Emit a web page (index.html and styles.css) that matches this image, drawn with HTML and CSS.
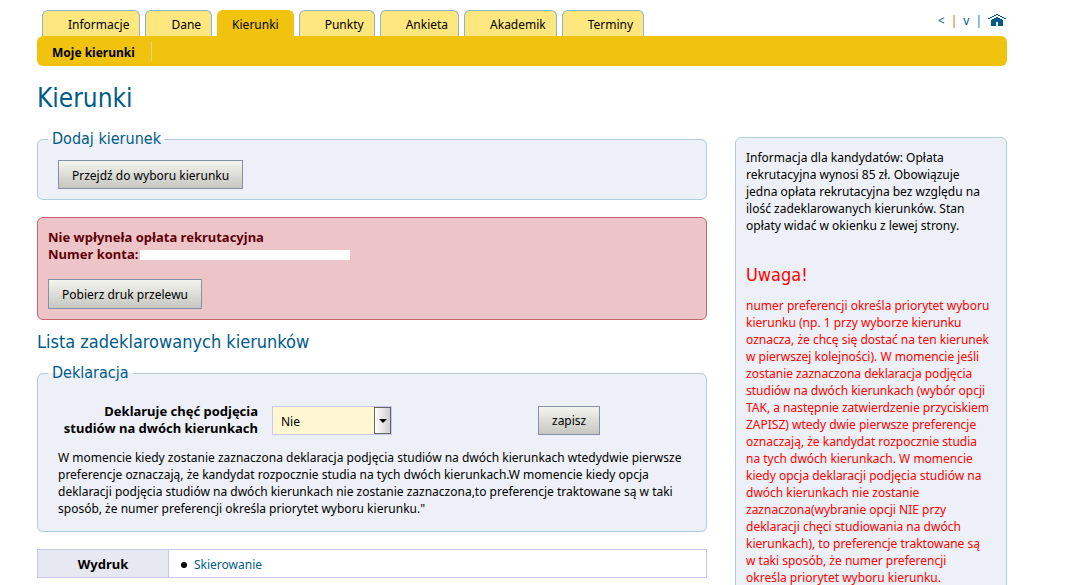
FILE: index.html
```html
<!DOCTYPE html>
<html lang="pl">
<head>
<meta charset="utf-8">
<title>Kierunki</title>
<link rel="stylesheet" href="styles.css">
</head>
<body>
<div class="page">
  <header class="top">
    <nav class="tabs">
      <a class="tab" href="#">Informacje</a>
      <a class="tab" href="#">Dane</a>
      <a class="tab active" href="#">Kierunki</a>
      <a class="tab" href="#">Punkty</a>
      <a class="tab" href="#">Ankieta</a>
      <a class="tab" href="#">Akademik</a>
      <a class="tab" href="#">Terminy</a>
    </nav>
    <div class="tools">
      <a href="#">&lt;</a>
      <span class="sep">|</span>
      <a href="#">v</a>
      <span class="sep blue">|</span>
      <a class="home" href="#" aria-label="Strona główna"><svg width="18" height="12" viewBox="0 0 18 12" shape-rendering="crispEdges"><path d="M0 4h2V3h2V2h2V1h2V0h2v1h2v1h2v1h2v1h2v1h-2V4h-2V3h-2V2h-2V1H8v1H6v1H4v1H2v1H0z"/><path d="M3 6h1V5h2V4h2V3h2v1h2v1h2v1h1v6h-5V8H8v4H3z"/></svg></a>
    </div>
  </header>
  <nav class="subnav"><a href="#">Moje kierunki</a></nav>
  <h1>Kierunki</h1>
  <div class="columns">
    <main class="main">
      <fieldset class="box add">
        <legend>Dodaj kierunek</legend>
        <button type="button">Przejdź do wyboru kierunku</button>
      </fieldset>
      <section class="alert">
        <p>Nie wpłyneła opłata rekrutacyjna</p>
        <p class="account">Numer konta: <span class="blank"></span></p>
        <button type="button">Pobierz druk przelewu</button>
      </section>
      <h2>Lista zadeklarowanych kierunków</h2>
      <fieldset class="box declaration">
        <legend>Deklaracja</legend>
        <div class="row">
          <label for="both">Deklaruje chęć podjęcia<br>studiów na dwóch kierunkach</label>
          <span class="choice">
            <select id="both"><option>Nie</option><option>Tak</option></select>
            <span class="arrow"></span>
          </span>
          <button type="button">zapisz</button>
        </div>
        <p>W momencie kiedy zostanie zaznaczona deklaracja podjęcia studiów na dwóch kierunkach wtedydwie pierwsze<br>preferencje oznaczają, że kandydat rozpocznie studia na tych dwóch kierunkach.W momencie kiedy opcja<br>deklaracji podjęcia studiów na dwóch kierunkach nie zostanie zaznaczona,to preferencje traktowane są w taki<br>sposób, że numer preferencji określa priorytet wyboru kierunku."</p>
      </fieldset>
      <table class="print">
        <tr><th scope="row">Wydruk</th><td><ul><li><a href="#">Skierowanie</a></li></ul></td></tr>
      </table>
    </main>
    <aside class="side">
      <p>Informacja dla kandydatów: Opłata<br>rekrutacyjna wynosi 85 zł. Obowiązuje<br>jedna opłata rekrutacyjna bez względu na<br>ilość zadeklarowanych kierunków. Stan<br>opłaty widać w okienku z lewej strony.</p>
      <h2>Uwaga!</h2>
      <p class="warn">numer preferencji określa priorytet wyboru<br>kierunku (np. 1 przy wyborze kierunku<br>oznacza, że chcę się dostać na ten kierunek<br>w pierwszej kolejności). W momencie jeśli<br>zostanie zaznaczona deklaracja podjęcia<br>studiów na dwóch kierunkach (wybór opcji<br>TAK, a następnie zatwierdzenie przyciskiem<br>ZAPISZ) wtedy dwie pierwsze preferencje<br>oznaczają, że kandydat rozpocznie studia<br>na tych dwóch kierunkach. W momencie<br>kiedy opcja deklaracji podjęcia studiów na<br>dwóch kierunkach nie zostanie<br>zaznaczona(wybranie opcji NIE przy<br>deklaracji chęci studiowania na dwóch<br>kierunkach), to preferencje traktowane są<br>w taki sposób, że numer preferencji<br>określa priorytet wyboru kierunku.</p>
    </aside>
  </div>
</div>
</body>
</html>
```
FILE: styles.css
```css
* { box-sizing: border-box; }
html { overflow: hidden; }
body {
  margin: 0;
  background: #fff;
  color: #000;
  font: 12px/17px Tahoma, "Noto Sans", sans-serif;
}
p, h1, h2, ul { margin: 0; padding: 0; }
a { color: #005b8a; text-decoration: none; }
.page { padding: 10px 70px 0 37px; }

.top { display: flex; justify-content: space-between; }
.tabs { display: flex; gap: 5px; padding-left: 5px; }
.tab {
  height: 26px;
  padding: 5px 10px 0 25px;
  border: 1px solid #87b5c9;
  border-bottom: 0;
  border-radius: 6px 6px 0 0;
  background: #ffe77f;
  color: #000;
}
.tab.active { padding: 5px 14px 0; background: #f0c30f; border-color: #f0c30f; }
.tools { display: flex; gap: 6px; padding: 2px 1px 0 0; }
.sep { color: #d06a00; }
.sep.blue { color: #0070c8; }
.home { padding-top: 2px; }
.home svg { display: block; fill: #005b8a; }

.subnav { padding: 5px 0 5px 15px; border-radius: 6px; background: #f0c30f; }
.subnav a {
  display: inline-block;
  height: 20px;
  padding: 3px 16px 0 0;
  border-right: 1px solid #e3d28a;
  color: #000;
  font-weight: bold;
}
h1, h2, legend {
  color: #005b8a;
  font-family: Tahoma, "DejaVu Sans Condensed", sans-serif;
  font-weight: normal;
}
h1 { margin: 14px 0 21px; font-size: 26px; line-height: 36px; }
h2 { font-size: 18px; line-height: 24px; }

.columns { display: flex; align-items: flex-start; gap: 28px; }
.main { flex: 1; min-width: 0; }
.box {
  min-width: 0;
  margin: 0;
  border: 1px solid #b1cddc;
  border-radius: 6px;
  background: #edf0f6;
}
legend { padding: 0 4px; font-size: 16px; line-height: 20px; }
.add { margin-top: -8px; padding: 11px 10px 10px; }
.declaration { margin-top: 9px; padding: 20px 10px 14px; }
.add button { margin-left: 10px; }
button {
  display: block;
  height: 29px;
  padding: 1px 13px 0;
  border: 1px solid #8391a8;
  border-radius: 0;
  background: linear-gradient(#f3f4ee, #c6c7c1);
  color: #000;
  font: inherit;
}
.alert {
  margin: 17px 0 10px;
  padding: 11px 10px 10px;
  border: 1px solid #c5646a;
  border-radius: 6px;
  background: #edc5c8;
}
.alert button { height: 30px; }
.alert p, .row label, .print th { font-size: 13px; font-weight: bold; }
.alert p { color: #600008; }
.alert .account { display: flex; align-items: center; gap: 2px; margin-bottom: 16px; }
.blank { width: 210px; height: 10px; background: #fff; }
.row {
  display: grid;
  grid-template-columns: 210px 120px auto;
  align-items: center;
  justify-content: start;
  column-gap: 14px;
}
.row label { text-align: right; }
.row button { margin-left: 132px; }
.choice { position: relative; height: 29px; }
select {
  width: 100%;
  height: 29px;
  padding: 2px 8px 0;
  border: 1px solid #c9c8ea;
  border-radius: 0;
  background: #fff7d2;
  color: #000;
  font: inherit;
  appearance: none;
}
.arrow {
  position: absolute;
  top: 1px;
  right: 1px;
  width: 17px;
  height: 27px;
  border: 1px solid #666;
  background: linear-gradient(90deg, #fff, #cfcfd2);
  pointer-events: none;
}
.arrow::after {
  content: "";
  position: absolute;
  left: 4px;
  top: 11px;
  border: 4px solid transparent;
  border-top-color: #000;
  border-bottom: 0;
}
.declaration p { margin: 12px 0 0 10px; white-space: nowrap; }
.print { width: 100%; margin-top: 17px; border-collapse: collapse; }
.print th, .print td { height: 28px; padding: 2px 12px 0; border: 1px solid #c9c8ea; }
.print th { width: 131px; background: #e6e9f2; }
.print ul { list-style: none; }
.print li { display: flex; align-items: center; gap: 7px; }
.print li::before { content: ""; width: 6px; height: 6px; border-radius: 50%; background: #000; }

.side {
  width: 272px;
  padding: 11px 10px;
  border: 1px solid #b1cddc;
  border-radius: 6px;
  background: #edf0f6;
  white-space: nowrap;
}
.side h2 { margin: 29px 0 10px; color: #f00; }
.warn { color: #f00; }
```
